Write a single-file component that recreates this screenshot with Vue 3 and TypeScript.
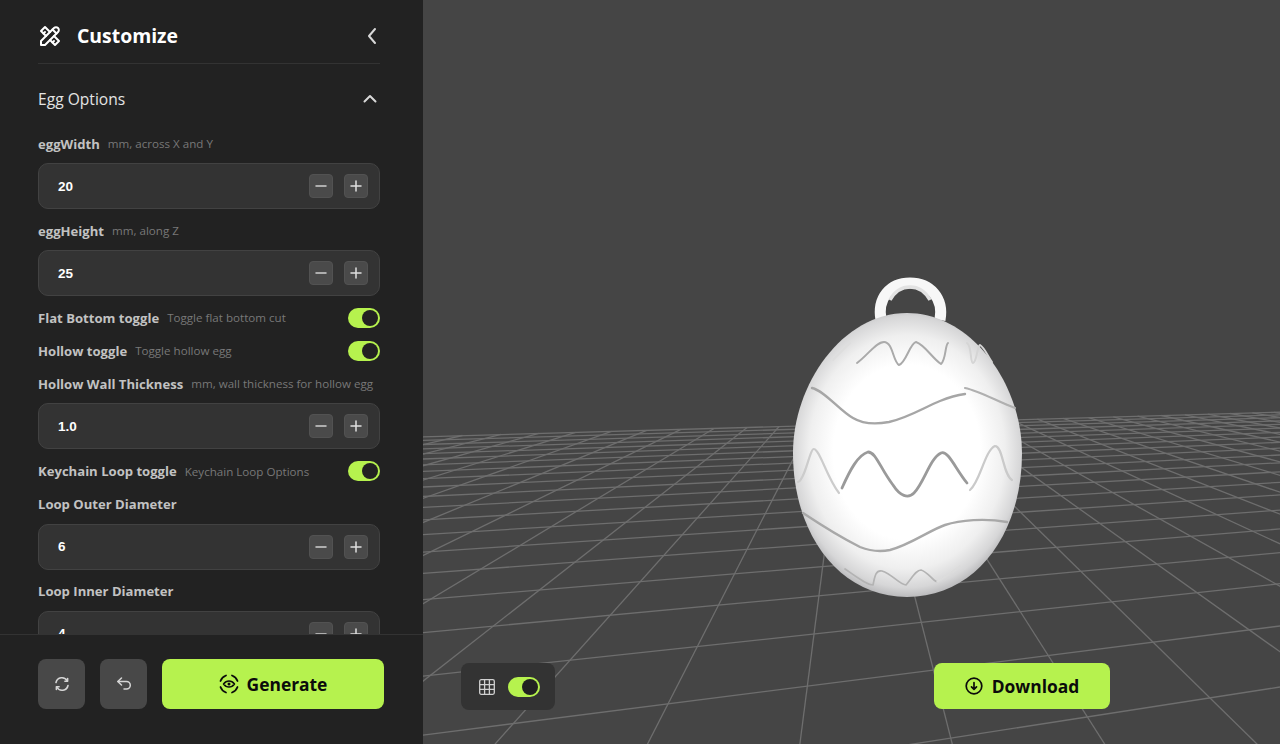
<script setup lang="ts">
interface Row {
  kind: 'num' | 'toggle'
  label: string
  hint?: string
  value?: string
}

const rows: Row[] = [
  { kind: 'num', label: 'eggWidth', hint: 'mm, across X and Y', value: '20' },
  { kind: 'num', label: 'eggHeight', hint: 'mm, along Z', value: '25' },
  { kind: 'toggle', label: 'Flat Bottom toggle', hint: 'Toggle flat bottom cut' },
  { kind: 'toggle', label: 'Hollow toggle', hint: 'Toggle hollow egg' },
  { kind: 'num', label: 'Hollow Wall Thickness', hint: 'mm, wall thickness for hollow egg', value: '1.0' },
  { kind: 'toggle', label: 'Keychain Loop toggle', hint: 'Keychain Loop Options' },
  { kind: 'num', label: 'Loop Outer Diameter', value: '6' },
  { kind: 'num', label: 'Loop Inner Diameter', value: '4' },
]

const VAx = 3450
const VAy = 350
const VBx = 851
const VBy = 346

function aLine(k: number): string {
  const y0 = 1 / (0.002597 + 0.00047 * k)
  const at = (x: number) => VAy + (y0 * (VAx - x)) / (VAx - 423)
  return `M423 ${at(423).toFixed(1)}L1280 ${at(1280).toFixed(1)}`
}

function bLine(j: number): string {
  const X = 800 + 152 * j
  const t = 78.4 / (397 + 0.02864 * (X - VBx))
  const tEnd = 454 / 397
  const px = (s: number) => VBx + (X - VBx) * s
  const py = (s: number) => VBy + 397 * s
  return `M${px(t).toFixed(1)} ${py(t).toFixed(1)}L${px(tEnd).toFixed(1)} ${py(tEnd).toFixed(1)}`
}

const gridLines: string[] = []
for (let k = -1; k <= 19; k++) gridLines.push(aLine(k))
for (let j = -24; j <= 24; j++) gridLines.push(bLine(j))
</script>

<template>
  <div class="page">
    <aside class="side">
      <div class="scroll">
        <header class="head">
          <svg class="tools" viewBox="0 0 24 24" width="24" height="24" fill="none" stroke="#fff" stroke-width="2" stroke-linecap="round" stroke-linejoin="round">
            <path d="M3 21h4l13-13a1.5 1.5 0 0 0-4-4L3 17v4" />
            <path d="M14.5 5.5l4 4" />
            <path d="M12 8L7 3 3 7l5 5" />
            <path d="M7 8L5.5 9.5" />
            <path d="M16 12l5 5-4 4-5-5" />
            <path d="M16 17l-1.500 1.500" />
          </svg>
          <h1 class="title">Customize</h1>
          <svg class="back" viewBox="0 0 10 18" width="10" height="18" fill="none" stroke="#d8d8d8" stroke-width="2" stroke-linecap="round" stroke-linejoin="round">
            <path d="M8 2L2 9l6 7" />
          </svg>
        </header>
        <div class="section">
          <span>Egg Options</span>
          <svg viewBox="0 0 14 9" width="14" height="9" fill="none" stroke="#d8d8d8" stroke-width="2" stroke-linecap="round" stroke-linejoin="round">
            <path d="M1.500 7.500L7 2l5.500 5.500" />
          </svg>
        </div>
        <div class="rows">
          <div v-for="r in rows" :key="r.label" class="row" :class="r.kind">
            <div class="lab">
              <span class="name">{{ r.label }}</span>
              <span v-if="r.hint" class="hint">{{ r.hint }}</span>
              <span v-if="r.kind === 'toggle'" class="sw"><i></i></span>
            </div>
            <div v-if="r.kind === 'num'" class="box">
              <span class="val">{{ r.value }}</span>
              <button class="step">
                <svg viewBox="0 0 14 14" width="14" height="14" stroke="#cfcfcf" stroke-width="1.500" stroke-linecap="round"><path d="M2 7h10" /></svg>
              </button>
              <button class="step">
                <svg viewBox="0 0 14 14" width="14" height="14" stroke="#e0e0e0" stroke-width="1.500" stroke-linecap="round"><path d="M2 7h10M7 2v10" /></svg>
              </button>
            </div>
          </div>
        </div>
      </div>
      <footer class="foot">
        <button class="sq">
          <svg viewBox="0 0 16 16" width="16" height="16" fill="none" stroke="#d5d5d5" stroke-width="1.600" stroke-linecap="round" stroke-linejoin="round">
            <path d="M2 6.500A6 6 0 0 1 13.200 5" />
            <path d="M14 9.500A6 6 0 0 1 2.800 11" />
            <path d="M13.600 2.500v2.800h-2.700M2.400 13.500v-2.800h2.700" />
          </svg>
        </button>
        <button class="sq">
          <svg viewBox="0 0 16 16" width="16" height="16" fill="none" stroke="#d5d5d5" stroke-width="1.500" stroke-linecap="round" stroke-linejoin="round">
            <path d="M5.500 9L1.800 5.500 5.500 2" />
            <path d="M2 5.500h8.500a3.800 3.800 0 0 1 0 7.600H8" />
          </svg>
        </button>
        <button class="gen">
          <svg viewBox="0 0 20 20" width="20" height="20" fill="none" stroke="#0b0b0b" stroke-width="1.800" stroke-linecap="round" stroke-linejoin="round">
            <path d="M1.500 7A9 9 0 0 1 7 1.500M13 1.500A9 9 0 0 1 18.500 7M18.500 13A9 9 0 0 1 13 18.500M7 18.500A9 9 0 0 1 1.500 13" />
            <path d="M4.500 10C7.500 6 12.500 6 15.500 10 12.500 14 7.500 14 4.500 10Z" stroke-width="1.500" />
            <circle cx="10" cy="10" r="1.500" fill="#0b0b0b" stroke="none" />
          </svg>
          <span>Generate</span>
        </button>
      </footer>
    </aside>

    <main class="stage">
      <svg class="scene" viewBox="423 0 857 744" preserveAspectRatio="none">
        <defs>
          <radialGradient id="eggFill" gradientUnits="userSpaceOnUse" cx="907" cy="452" r="146" gradientTransform="translate(907 452) scale(0.84 1) translate(-907 -452)">
            <stop offset="0" stop-color="#fff" />
            <stop offset="0.6" stop-color="#fff" />
            <stop offset="0.8" stop-color="#efefef" />
            <stop offset="0.93" stop-color="#d6d6d7" />
            <stop offset="1" stop-color="#b8b8ba" />
          </radialGradient>
          <filter id="soft" x="-5%" y="-5%" width="110%" height="110%">
            <feGaussianBlur stdDeviation="0.5" />
          </filter>
        </defs>
        <path v-for="(d, i) in gridLines" :key="i" :d="d" class="gl" />
        <path d="M881 320C877 298 890 283 910 283C930 283 944 298 940 320" fill="none" stroke="#f7f7f7" stroke-width="11" />
        <path d="M890 300C895 291 902 287 910 287C918 287 925 291 930 300" fill="none" stroke="#e2e2e2" stroke-width="3.500" />
        <path d="M907 313C972 313 1022 385 1022 453C1022 535 975 597 907 597C840 597 793 535 793 453C793 385 842 313 907 313Z" fill="url(#eggFill)" />
        <g fill="none" stroke-linecap="round" stroke-linejoin="round" filter="url(#soft)">
          <path d="M812 388C825 391 840 411 853 418C863 424 878 424 889 422C908 418 925 407 940 401C950 397 958 395 965 394" stroke="#a6a6a6" stroke-width="2.400" />
          <path d="M965 388C980 391 1000 403 1015 408" stroke="#b0b0b0" stroke-width="2.200" />
          <path d="M803 513C818 523 840 537 860 547C870 551 880 552 890 550C910 545 930 530 945 525C960 520 985 518 1007 522" stroke="#a8a8a8" stroke-width="2.400" />
          <path d="M842 488C850 470 858 455 868 452C876 452 880 468 893 485C900 496 908 499 914 493C924 483 930 458 941 453C948 450 955 468 967 483" stroke="#9a9a9a" stroke-width="2.800" />
          <path d="M970 490C980 482 985 450 995 446C1003 446 1003 475 1012 480" stroke="#cacaca" stroke-width="2.200" />
          <path d="M798 482C805 480 810 448 814 449C820 450 827 478 839 493" stroke="#cccccc" stroke-width="2.200" />
          <path d="M857 363C868 355 876 342 884 342C893 342 893 362 899 365C906 363 910 343 916 342C925 345 932 358 941 364C946 360 945 345 948 343" stroke="#aaaaaa" stroke-width="2" />
          <path d="M833 360L850 343" stroke="#dedede" stroke-width="2" />
          <path d="M967 343C972 346 970 363 973 363C977 362 977 346 980 345C985 348 988 357 992 362" stroke="#d5d5d5" stroke-width="2" />
          <path d="M845 569C858 578 867 585 873 585C875 575 876 570 882 571C892 574 900 585 906 585C912 578 916 570 921 570C928 572 932 580 937 582" stroke="#b3b3b3" stroke-width="1.700" />
          <path d="M937 582C948 575 955 570 960 566" stroke="#dcdcdc" stroke-width="1.700" />
        </g>
      </svg>

      <div class="gridctl">
        <svg viewBox="0 0 16 16" width="16" height="16" fill="none" stroke="#d0d0d0" stroke-width="1.300">
          <rect x=".7" y=".7" width="14.600" height="14.600" rx="1.500" />
          <path d="M5.600 1v14M10.400 1v14M1 5.600h14M1 10.400h14" />
        </svg>
        <span class="sw"><i></i></span>
      </div>

      <button class="dl">
        <svg viewBox="0 0 18 18" width="18" height="18" fill="none" stroke="#0b0b0b" stroke-width="1.700" stroke-linecap="round" stroke-linejoin="round">
          <circle cx="9" cy="9" r="7.800" />
          <path d="M9 5.500v6.500M6.500 9.800L9 12.300l2.500-2.500" />
        </svg>
        <span>Download</span>
      </button>
    </main>
  </div>
</template>

<style>
html,
body {
  margin: 0;
  background: #454545;
}
</style>

<style scoped>
.page {
  display: flex;
  width: 1280px;
  height: 744px;
  overflow: hidden;
  font-family: "Open Sans", "Noto Sans", sans-serif;
}
.side {
  width: 423px;
  flex: none;
  height: 100%;
  display: flex;
  flex-direction: column;
  background: #222222;
}
.scroll {
  flex: 1;
  min-height: 0;
  overflow: hidden;
  padding: 0 43px 0 38px;
}
.head {
  display: flex;
  align-items: center;
  border-bottom: 1px solid #333333;
  box-sizing: content-box;
  padding-top: 9px;
  height: 54px;
}
.tools {
  flex: none;
  margin-right: 15px;
}
.title {
  flex: 1;
  margin: 0;
  font-size: 19.400px;
  font-weight: 700;
  color: #ffffff;
  line-height: 28px;
}
.back {
  margin-right: 3px;
}
.section {
  display: flex;
  align-items: center;
  justify-content: space-between;
  height: 70px;
  font-size: 15.600px;
  color: #e4e4e4;
  padding-right: 3px;
}
.section svg {
  margin-top: -1px;
}
.rows {
  display: flex;
  flex-direction: column;
}
.lab {
  display: flex;
  align-items: center;
  height: 33.100px;
  gap: 8px;
  white-space: nowrap;
}
.row:first-child .lab {
  margin-top: -7px;
}
.name {
  font-size: 13.100px;
  font-weight: 700;
  color: #c2c2c2;
}
.hint {
  font-size: 11.600px;
  color: #787878;
}
.box {
  height: 44px;
  display: flex;
  align-items: center;
  gap: 11px;
  padding: 0 11px 0 19px;
  background: #333333;
  border: 1px solid #424242;
  border-radius: 10px;
  margin-bottom: 5px;
  margin-top: 3px;
}
.val {
  flex: 1;
  font-family: "Liberation Sans", Arial, sans-serif;
  font-size: 13.500px;
  font-weight: 700;
  color: #ffffff;
}
.step {
  width: 24px;
  height: 24px;
  padding: 0;
  display: flex;
  align-items: center;
  justify-content: center;
  background: #4a4a4a;
  border: 1px solid #525252;
  border-radius: 4px;
}
.sw {
  display: block;
  position: relative;
  width: 32px;
  height: 20px;
  flex: none;
  border-radius: 10px;
  background: #b6f24e;
}
.lab .sw {
  margin-left: auto;
}
.sw i {
  position: absolute;
  right: 2px;
  top: 2px;
  width: 16px;
  height: 16px;
  border-radius: 50%;
  background: #222222;
}
.foot {
  flex: none;
  height: 110px;
  box-sizing: border-box;
  border-top: 1px solid #333333;
  padding: 24px 39px 0 38px;
  display: flex;
  align-items: flex-start;
  gap: 15px;
  background: #222222;
}
.sq {
  width: 47px;
  height: 50px;
  padding: 0;
  display: flex;
  align-items: center;
  justify-content: center;
  background: #484848;
  border: none;
  border-radius: 8px;
}
.gen {
  flex: 1;
  height: 50px;
  display: flex;
  align-items: center;
  justify-content: center;
  gap: 8px;
  background: #b6f24e;
  border: none;
  border-radius: 8px;
  font-family: "Open Sans", sans-serif;
  font-size: 17.400px;
  font-weight: 700;
  color: #0b0b0b;
}
.stage {
  position: relative;
  flex: 1;
  background: #454545;
}
.scene {
  display: block;
  width: 100%;
  height: 100%;
}
.gl {
  stroke: #6e6e6e;
  stroke-width: 1.300;
  fill: none;
}
.gridctl {
  position: absolute;
  left: 38px;
  top: 663px;
  width: 94px;
  height: 47px;
  box-sizing: border-box;
  padding-left: 18px;
  display: flex;
  align-items: center;
  gap: 13px;
  background: #333333;
  border-radius: 8px;
}
.dl {
  position: absolute;
  left: 511px;
  top: 663px;
  width: 176px;
  height: 46px;
  padding: 0;
  display: flex;
  align-items: center;
  justify-content: center;
  gap: 9px;
  background: #b6f24e;
  border: none;
  border-radius: 8px;
  font-family: "Open Sans", sans-serif;
  font-size: 17.400px;
  font-weight: 700;
  color: #0b0b0b;
}
</style>
